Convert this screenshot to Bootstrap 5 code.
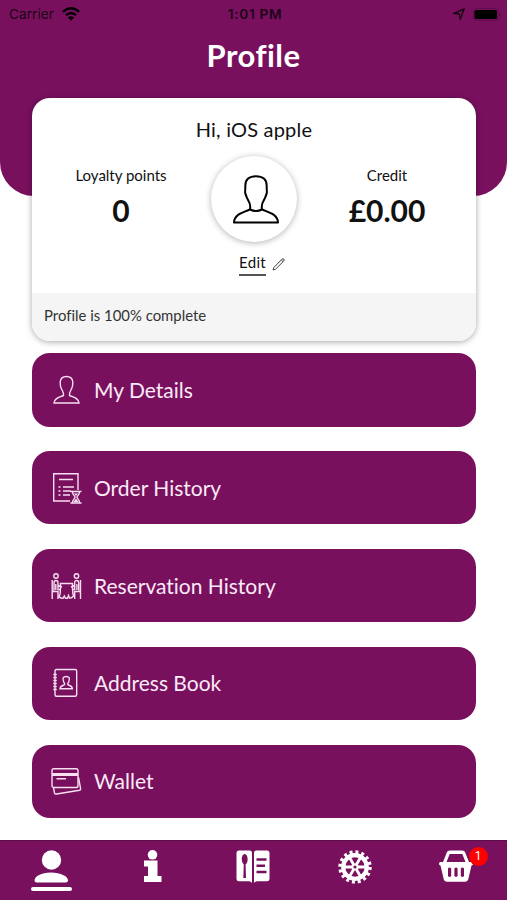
<!DOCTYPE html>
<html lang="en">
<head>
<meta charset="utf-8">
<meta name="viewport" content="width=device-width, initial-scale=1">
<title>Profile</title>
<link href="https://cdn.jsdelivr.net/npm/bootstrap@5.3.0/dist/css/bootstrap.min.css" rel="stylesheet">
<style>
:root { --plum: #79105e; }
body { font-family: Lato, "Liberation Sans", sans-serif; font-variant-ligatures: none; color: #111; line-height: 1.2; }
svg { display: block; flex: none; }
.app { height: 900px; }
.plum { background: var(--plum); }
.top-panel { height: 196px; border-radius: 0 0 34px 34px; }
.status { height: 27px; padding: 1px 6px 0 9px; font: 13.7px/26px Inter, sans-serif; color: #1c0417; }
.status .clock { font-weight: 600; letter-spacing: .65px; }
.page-title { font: 700 31px/56px Lato, sans-serif; letter-spacing: .45px; }
.profile { margin: -98px 31px 0 32px; height: 243px; border-radius: 18px; box-shadow: 0 1px 6px rgba(0,0,0,.35); }
.greeting { font-size: 20px; line-height: 24px; padding-top: 19px; letter-spacing: .2px; }
.stats { height: 96px; margin-top: 10px; }
.stat { width: 178px; padding-top: 14px; }
.stat-name { font-size: 15px; line-height: 20px; }
.stat-num { font-size: 30px; line-height: 36px; font-weight: 700; margin-top: 7px; }
.avatar { width: 86px; height: 86px; margin-top: 5px; box-shadow: 0 1px 6px rgba(0,0,0,.3); }
.edit { height: 24px; font-size: 15px; margin-top: 5px; gap: 6px; padding-left: 16px; letter-spacing: .3px; }
.edit-word { border-bottom: 2px solid #555; line-height: 20px; padding-bottom: 2px; }
.complete { height: 48px; background: #f5f5f5; border-radius: 0 0 18px 18px; padding: 0 0 2px 12px; font-size: 14.9px; color: #333; }
.menu { margin: 12.4px 31px 0 32px; gap: 24.5px; }
.menu-row { height: 73.3px; border-radius: 18px; padding-left: 19px; color: #fbeaf7; font-size: 21px; }
.menu-row span { padding-bottom: 1px; }
.menu-row svg { margin-right: 12px; fill: none; stroke: #f7def1; stroke-width: 1.4; }
.tabs { height: 60px; border-top: 1px solid #5c0c48; }
.tab { width: 20%; padding-top: 9px; }
.count { position: absolute; left: 63px; top: 6px; width: 19px; height: 19px; background: #f00; font: 12px/19px Roboto, sans-serif; }
</style>
<script src="https://cdn.jsdelivr.net/npm/bootstrap@5.3.0/dist/js/bootstrap.bundle.min.js"></script>
</head>
<body>
<div class="app d-flex flex-column overflow-hidden bg-white">
  <header class="top-panel plum flex-shrink-0">
    <div class="status row g-0 align-items-center">
      <div class="col d-flex align-items-center gap-2"><span>Carrier</span>
        <svg width="18" height="14" viewBox="0 0 18 14" fill="none" stroke="#000" stroke-width="2.3"><path d="M.9 4.8Q9-2.3 17.1 4.8M4 8.2Q9 3.7 14 8.2"/><path d="M9 13.7 5.9 10.6Q9 8 12.1 10.6Z" fill="#000" stroke="none"/></svg>
      </div>
      <div class="col-auto clock">1:01 PM</div>
      <div class="col d-flex align-items-center justify-content-end">
        <svg class="me-2" width="12" height="12" viewBox="0 0 12 12" fill="none" stroke="#1c0417" stroke-width="1.5"><path d="M11 1 7.3 10.8 6.2 6 1.2 5.4Z"/></svg>
        <svg width="28" height="13" viewBox="0 0 28 13"><rect x=".6" y=".6" width="24.5" height="11.8" rx="3" fill="none" stroke="#610c4b"/><rect x="1.500" y="2" width="22.500" height="9" rx="1.5"/><path d="M26.500 4.5v4q2-2 0-4" fill="#4d0a3c"/></svg>
      </div>
    </div>
    <h1 class="page-title text-center text-white m-0">Profile</h1>
  </header>

  <section class="profile bg-white position-relative flex-shrink-0 d-flex flex-column">
    <div class="greeting text-center">Hi, iOS apple</div>
    <div class="stats d-flex justify-content-between text-center">
      <div class="stat"><div class="stat-name">Loyalty points</div><div class="stat-num">0</div></div>
      <div class="avatar rounded-circle bg-white d-flex align-items-center justify-content-center flex-shrink-0">
        <svg class="ms-1" width="46" height="49" viewBox="0 0 46 49" fill="none" stroke="#000" stroke-width="2" stroke-linejoin="round"><path d="M1 47.5C1.300 40 8 38 17 34.500C18 30 17 28 14.800 24.500C13.300 22 13.300 20.500 12.300 18.500C11.800 16 12.500 14 12.300 11.500C12 4 16.500 1.200 23 1.200S34 4 33.700 11.500C33.500 14 34.200 16 33.700 18.500C32.700 20.500 32.700 22 31.200 24.500C29 28 28 30 29 34.500C38 38 44.700 40 45 47.500ZM17 34.500Q23 37.500 29 34.500"/></svg>
      </div>
      <div class="stat"><div class="stat-name">Credit</div><div class="stat-num">£0.00</div></div>
    </div>
    <div class="edit d-flex justify-content-center align-items-center"><span class="edit-word">Edit</span>
      <svg width="13" height="13" viewBox="0 0 13 13" fill="none" stroke="#444"><path d="M1 12 1.800 9.500 10 1.200Q11 .3 11.900 1.100T11.800 3L3.500 11.200ZM9.300 2l1.700 1.700"/></svg>
    </div>
    <div class="complete d-flex align-items-center mt-auto">Profile is 100% complete</div>
  </section>

  <nav class="menu d-flex flex-column">
    <a class="menu-row plum d-flex align-items-center text-decoration-none" href="#">
      <svg width="31" height="32" viewBox="0 0 31 32"><path d="M3 29C3.200 24.500 8 23.500 12.500 21.500C12.800 18 11.500 17 10.500 15C9 12 9.100 10 9.200 8C9.500 4.500 11.500 2.500 15.500 2.500S21.500 4.500 21.800 8C21.900 10 22 12 20.500 15C19.500 17 18.200 18 18.500 21.500C23 23.500 27.800 24.500 28 29Z"/></svg><span>My Details</span></a>
    <a class="menu-row plum d-flex align-items-center text-decoration-none" href="#">
      <svg width="31" height="32" viewBox="0 0 31 32"><path d="M19 29H2.700V1.700H27V18M8 7.500H22M12 15h11M12 19h8M12 23h7M7.500 15h2M7.500 19h2M7.500 23h2M19.500 19.500h11M19.500 31h11M21.500 19.500c0 4 2.500 4 2.500 5.700s-2.500 2-2.500 5.800M28.500 19.500c0 4-2.500 4-2.500 5.700s2.500 2 2.500 5.800"/><path d="M23 21.500h4L25 24ZM22.500 30 25 26.500l2.500 3.500Z" fill="#f7def1" stroke="none"/></svg><span>Order History</span></a>
    <a class="menu-row plum d-flex align-items-center text-decoration-none" href="#">
      <svg width="31" height="32" viewBox="0 0 31 32"><circle cx="5" cy="6" r="2.200"/><circle cx="25.500" cy="6" r="2.200"/><path d="M1.200 10V29M1.200 21.500H7V29M3 20.500V13Q3 10.500 5 10.500T7 13V15.500L11 17M7 16V19.500H9M29.500 10V29M29.500 21.500H23.700V29M27.700 20.500V13Q27.700 10.500 25.600 10.500T23.700 13V15.500L20 17M23.700 16V19.500H22M9.500 13.500H21.500V18Q21.500 23 22.500 26Q20.500 28.500 18.500 28L17.500 25.500 16.500 28.300H14.500L13.300 26 12 28.300Q10 28.500 8.300 27Q9.500 23 9.500 18ZM4.800 14v6M25.900 14v6"/></svg><span>Reservation History</span></a>
    <a class="menu-row plum d-flex align-items-center text-decoration-none" href="#">
      <svg width="31" height="32" viewBox="0 0 31 32"><path d="M4 5V4Q4 2.500 5.500 2.500H24Q25.700 2.500 25.700 4V27.500Q25.700 29.300 24 29.300H5.500Q4 29.300 4 27.500V26M2.300 7.500h3.500M2.300 10.500h3.500M2.300 13.500h3.500M2.300 16.500h3.500M2.300 19.500h3.500M2.300 22.500h3.500M4 5v21"/><path d="M9 21.800C9 19 11.500 18.700 13.600 17.700Q14 16.500 12.700 15C11 10.800 12.500 9.500 15.200 9.500S19.400 10.800 17.700 15Q16.400 16.500 16.800 17.700C18.900 18.700 21.400 19 21.400 21.800Z"/></svg><span>Address Book</span></a>
    <a class="menu-row plum d-flex align-items-center text-decoration-none" href="#">
      <svg width="31" height="32" viewBox="0 0 31 32"><rect x="1" y="3.800" width="26" height="18.700" rx="1.800"/><path d="M1 9.500H27" stroke-width="3"/><path d="M5.500 13.800H15M2.500 22.500 3.500 28Q4 29.300 5.500 29L28.500 25.300Q29.800 25 29.600 23.500L27.500 12.500"/></svg><span>Wallet</span></a>
  </nav>

  <footer class="tabs plum d-flex mt-auto flex-shrink-0">
    <div class="tab d-flex justify-content-center"><svg width="42" height="43" viewBox="0 0 42 43" fill="#fff"><circle cx="21.500" cy="10" r="9.700"/><path d="M4.500 30C5 26.500 11 22.500 21 22.500S37.500 26.500 38 30Q38 32.500 35.500 32.500H7Q4.500 32.500 4.500 30Z"/><rect x="1" y="37" width="41" height="4" rx="2"/></svg></div>
    <div class="tab d-flex justify-content-center"><svg width="20" height="33" viewBox="0 0 20 33" fill="#fff"><circle cx="10.500" cy="4.800" r="4.800"/><path d="M2 10.500H15.500V26H19.500V32H2V26H6V16.500H2Z"/></svg></div>
    <div class="tab d-flex justify-content-center"><svg width="34" height="33" viewBox="0 0 34 33" fill="#fff"><path fill-rule="evenodd" d="M3 .5H13.500Q16 .5 16 3V33Q15 31.300 13 31.300H3Q.5 31.300.5 29V3Q.5.500 3 .5ZM8.700 4C5.500 4 4.500 11.500 7.800 14.500L7.300 28H10L9.600 14.500C13 11.500 11.800 4 8.700 4ZM31 .5H20.500Q18 .5 18 3V33Q19 31.300 21 31.300H31Q33.500 31.300 33.500 29V3Q33.500.500 31 .5ZM20.500 8.300V10.700H30.500V8.300ZM20.500 14.500V16.900H29V14.500ZM20.500 20.800V23.200H30.500V20.800Z"/></svg></div>
    <div class="tab d-flex justify-content-center"><svg width="34" height="34" viewBox="-17 -17 34 34" fill="none" stroke="#fff"><circle r="11.800" stroke-width="4.200"/><circle r="15" stroke-width="3.400" stroke-dasharray="2.950 2.941"/><path d="M-11 0H11M-5.500-9.500 5.500 9.500M5.500-9.500-5.500 9.500" stroke-width="2.800"/><circle r="3.600" fill="#fff" stroke="none"/><circle r="1.600" fill="#79105e" stroke="none"/></svg></div>
    <div class="tab d-flex justify-content-center position-relative"><svg width="34" height="33" viewBox="0 0 34 33" fill="#fff"><path fill-rule="evenodd" d="M1.500 12H4L8 2Q8.700.500 10.500.500H23.500Q25.300.500 26 2L30 12H32.500Q34 12 34 13.700T32.500 15.500L29.200 29.500Q28.500 31.800 26 31.800H8Q5.500 31.800 4.800 29.500L1.500 15.500Q0 15.500 0 13.700T1.500 12ZM7.500 12H26.500L23.300 4H10.700ZM9 18.500V26Q10.500 28 12.200 26V18.500Q10.500 16.500 9 18.500ZM15.400 18.500V26Q17 28 18.600 26V18.500Q17 16.500 15.400 18.500ZM21.800 18.500V26Q23.500 28 25 26V18.500Q23.500 16.500 21.800 18.500Z"/></svg><span class="count rounded-circle text-white text-center">1</span></div>
  </footer>
</div>
</body>
</html>
